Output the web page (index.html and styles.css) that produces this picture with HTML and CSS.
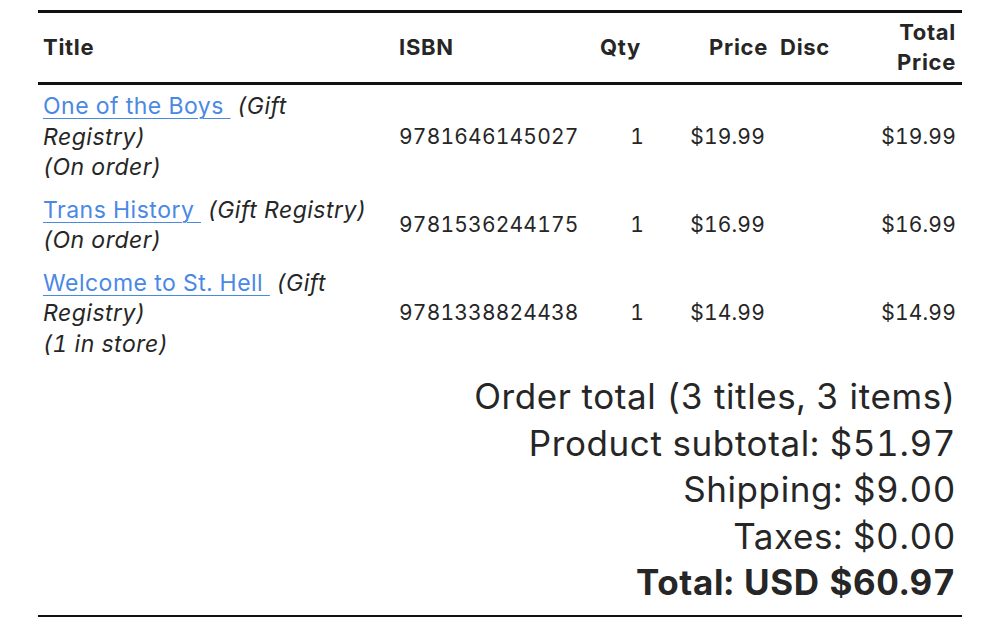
FILE: index.html
```html
<!DOCTYPE html>
<html lang="en">
<head>
    <meta charset="UTF-8">
    <meta name="viewport" content="width=device-width, initial-scale=1.0">
    <title>Order summary</title>
    <link rel="stylesheet" href="styles.css">
</head>
<body>

<div class="order">
    <table class="items">
        <colgroup>
            <col class="col-title">
            <col class="col-isbn">
            <col class="col-qty">
            <col class="col-price">
            <col class="col-disc">
            <col class="col-total">
        </colgroup>
        <thead>
            <tr>
                <th class="left">Title</th>
                <th class="left">ISBN</th>
                <th class="right">Qty</th>
                <th class="right price">Price</th>
                <th class="right">Disc</th>
                <th class="right total">Total<br>Price</th>
            </tr>
        </thead>
        <tbody>
            <tr>
                <td class="title"><a href="#">One of the Boys&nbsp;</a> <em>(Gift Registry)</em><br><em>(On order)</em></td>
                <td>9781646145027</td>
                <td class="right qty">1</td>
                <td class="right">$19.99</td>
                <td></td>
                <td class="right total">$19.99</td>
            </tr>
            <tr>
                <td class="title"><a href="#">Trans History&nbsp;</a> <em>(Gift Registry)</em><br><em>(On order)</em></td>
                <td>9781536244175</td>
                <td class="right qty">1</td>
                <td class="right">$16.99</td>
                <td></td>
                <td class="right total">$16.99</td>
            </tr>
            <tr>
                <td class="title"><a href="#">Welcome to St. Hell&nbsp;</a> <em>(Gift Registry)</em><br><em>(1 in store)</em></td>
                <td>9781338824438</td>
                <td class="right qty">1</td>
                <td class="right">$14.99</td>
                <td></td>
                <td class="right total">$14.99</td>
            </tr>
        </tbody>
    </table>

    <div class="summary">
        <div>Order total (3 titles, 3 items)</div>
        <div>Product subtotal: $51.97</div>
        <div>Shipping: $9.00</div>
        <div>Taxes: $0.00</div>
        <div class="grand">Total: USD $60.97</div>
    </div>
</div>

</body>
</html>
```

FILE: styles.css
```css
body {
    margin: 0;
    padding: 10px 38px 0 38px;
    font-family: Inter, "Noto Sans", sans-serif;
    font-variant-numeric: tabular-nums;
    color: #262626;
    background-color: #fff;
}
.order {
    width: 924px;
}
.items {
    width: 100%;
    border-collapse: collapse;
    table-layout: fixed;
    border-top: 3px solid #111;
}
.col-title { width: 356px; }
.col-isbn { width: 196px; }
.col-qty { width: 56px; }
.col-price { width: 124px; }
.col-disc { width: 65px; }
.col-total { width: 127px; }
th, td {
    padding: 6px 5px;
    vertical-align: middle;
}
thead th {
    font-size: 22px;
    font-weight: 700;
    line-height: 30px;
    padding: 4px 5px 5px 5px;
    border-bottom: 3px solid #111;
    letter-spacing: 0.7px;
}
thead th.price {
    padding-right: 2px;
}
tbody td {
    font-size: 21px;
    line-height: 30.5px;
    letter-spacing: 0.2px;
}
tbody td.title {
    font-size: 23px;
    letter-spacing: 0.5px;
}
tbody td.qty {
    padding-right: 2px;
}
.left {
    text-align: left;
}
.right {
    text-align: right;
}
.total {
    padding-right: 6px;
}
.title a {
    color: #4a88e6;
    text-decoration: underline;
    text-decoration-thickness: 1px;
    text-underline-offset: 4px;
}
.title em {
    font-style: italic;
}
.summary {
    margin-top: 8px;
    padding-right: 6px;
    padding-bottom: 9px;
    text-align: right;
    font-size: 35px;
    line-height: 46.5px;
    letter-spacing: 0.6px;
    border-bottom: 2px solid #111;
}
.summary .grand {
    font-weight: 700;
}
```
